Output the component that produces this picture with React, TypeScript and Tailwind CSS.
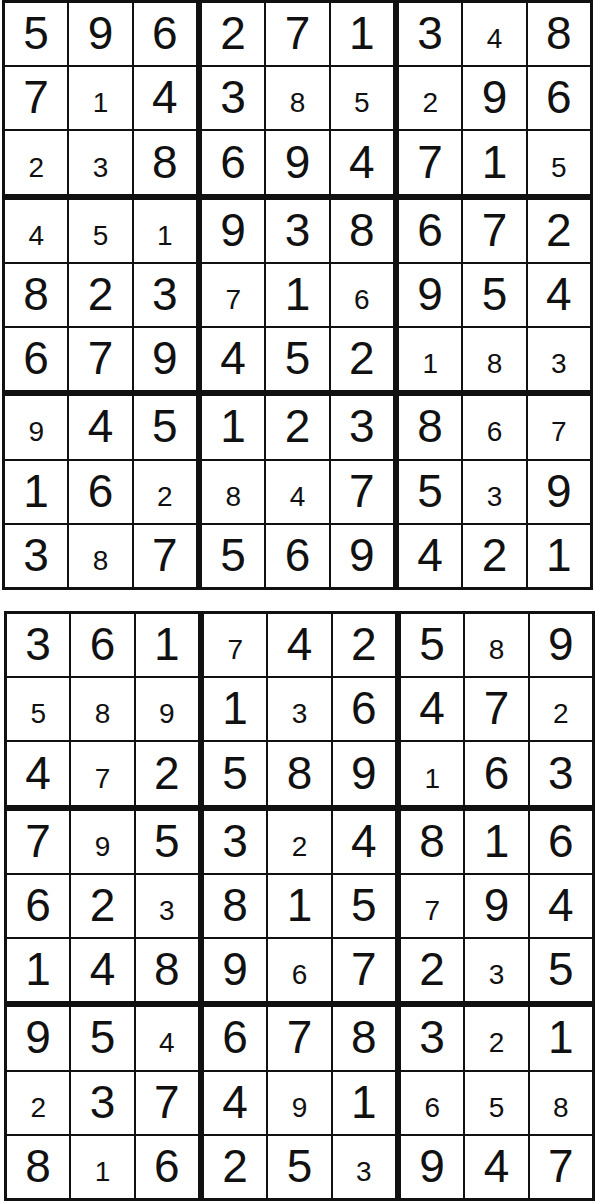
// two solved sudoku grids, big = given digits, small = filled-in ones
type Puzzle = { digits: string[]; small: string[] };

const puzzles: Puzzle[] = [
  {
    digits: [
      "596271348",
      "714385296",
      "238694715",
      "451938672",
      "823716954",
      "679452183",
      "945123867",
      "162847539",
      "387569421",
    ],
    small: [
      "000000010",
      "010011100",
      "110000001",
      "111000000",
      "000101000",
      "000000111",
      "100000011",
      "001110010",
      "010000000",
    ],
  },
  {
    digits: [
      "361742589",
      "589136472",
      "472589163",
      "795324816",
      "623815794",
      "148967235",
      "954678321",
      "237491658",
      "816253947",
    ],
    small: [
      "000100010",
      "111010001",
      "010000100",
      "010010000",
      "001000100",
      "000010010",
      "001000010",
      "100010111",
      "010001000",
    ],
  },
];

function Cell({ value, small }: { value: string; small: boolean }) {
  return (
    <div className="bg-white flex items-center justify-center overflow-hidden">
      {small ? (
        <span className="text-[28px] leading-none text-[#111] translate-y-[5px]">{value}</span>
      ) : (
        <span className="text-[46px] leading-none text-[#111] -translate-y-[1.5px]">{value}</span>
      )}
    </div>
  );
}

function Grid({ puzzle, className }: { puzzle: Puzzle; className: string }) {
  const boxes = [0, 1, 2, 3, 4, 5, 6, 7, 8];
  return (
    <div className={`bg-[#111] p-[3px] grid grid-cols-3 grid-rows-3 gap-[6px] w-[591px] h-[590px] ${className}`}>
      {boxes.map((b) => {
        const br = Math.floor(b / 3) * 3;
        const bc = (b % 3) * 3;
        return (
          <div key={b} className="grid grid-cols-3 grid-rows-3 gap-[2px]">
            {boxes.map((c) => {
              const r = br + Math.floor(c / 3);
              const col = bc + (c % 3);
              return (
                <Cell
                  key={c}
                  value={puzzle.digits[r][col]}
                  small={puzzle.small[r][col] === "1"}
                />
              );
            })}
          </div>
        );
      })}
    </div>
  );
}

export default function App() {
  return (
    <div className="w-[595px] h-[1202px] bg-white flex flex-col font-['Liberation_Sans',Arial,sans-serif]">
      <Grid puzzle={puzzles[0]} className="ml-[2px]" />
      <Grid puzzle={puzzles[1]} className="ml-[4px] mt-[21px]" />
    </div>
  );
}
